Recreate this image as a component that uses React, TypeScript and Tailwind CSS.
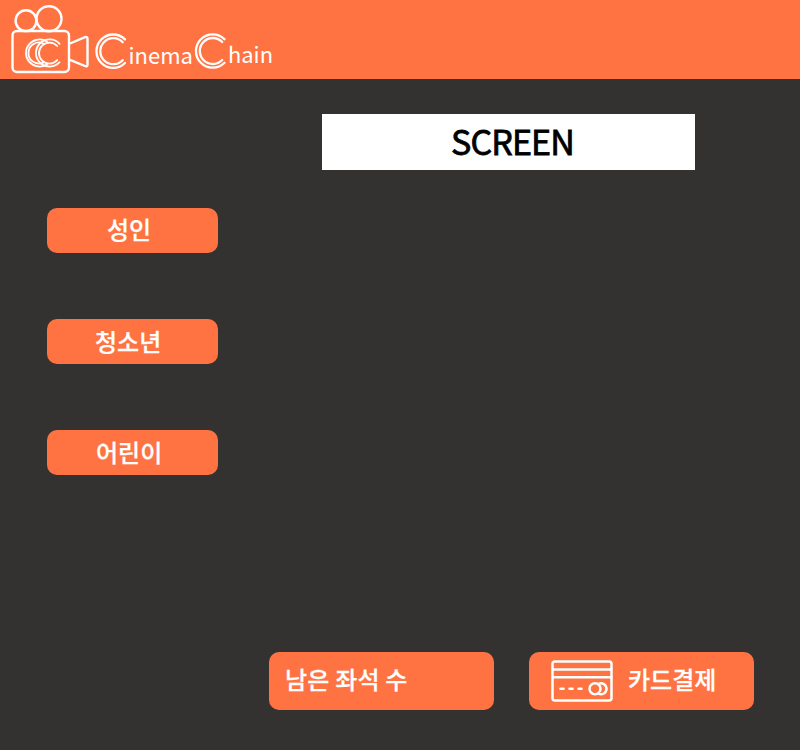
import type { ReactNode } from "react";

const fontStack = "font-['Noto_Sans_CJK_KR',sans-serif]";

function Logo() {
  return (
    <svg width="280" height="79" viewBox="0 0 280 79" fill="none" stroke="white">
      <g strokeWidth="2.4">
        <circle cx="26" cy="20.7" r="10.4" />
        <circle cx="49" cy="18.7" r="12.5" />
        <rect x="12.5" y="31" width="56.5" height="41" rx="4.5" />
        <path d="M70 43.5 L85 37.2 Q87.5 36.5 87.5 39 V64.5 Q87.5 67 85 66 L70 59.8" strokeLinejoin="round" />
      </g>
      <g strokeWidth="1.8" strokeLinecap="round">
        <path d="M47 41.6 A13.6 13.6 0 1 0 47 64.4" />
        <path d="M44 43.8 A10.5 10.5 0 1 0 44 62.2" />
        <path d="M59.6 43.8 A13.6 13.6 0 1 0 59.6 62.2" />
        <path d="M57.2 46 A10.5 10.5 0 1 0 57.2 60.2" />
      </g>
      <g strokeWidth="2.3" strokeLinecap="round">
        <path d="M125 39.4 A16.7 16.7 0 1 0 125 63" />
        <path d="M122.7 42.2 A13 13 0 1 0 122.7 60.2" />
        <path d="M224.5 39.2 A16.7 16.7 0 1 0 224.5 62.8" />
        <path d="M222.2 42 A13 13 0 1 0 222.2 60" />
      </g>
      <g fill="white" stroke="none" className="font-['Noto_Sans_CJK_KR',sans-serif] text-[22.5px]">
        <text x="128.5" y="63.5" textLength="64.5" lengthAdjust="spacingAndGlyphs">inema</text>
        <text x="228" y="63.2" textLength="45" lengthAdjust="spacingAndGlyphs">hain</text>
      </g>
    </svg>
  );
}

function CardIcon() {
  return (
    <svg width="64" height="44" viewBox="0 0 64 44" fill="none" stroke="white" strokeWidth="2.5">
      <rect x="2.5" y="2.5" width="59" height="39" rx="2.5" />
      <path d="M2.5 10.5 H61.5 M2.5 18.2 H61.5" />
      <path d="M10.5 29.8 H13.5 M19.5 29.8 H22.5 M28.5 29.8 H31.5" strokeLinecap="round" />
      <circle cx="45" cy="29.8" r="5.5" />
      <path d="M48.5 24.9 A5.5 5.5 0 1 1 48.5 34.7" />
    </svg>
  );
}

function TicketButton({ children }: { children: ReactNode }) {
  return (
    <button className="flex h-[45px] w-[171px] items-center rounded-[10px] bg-[#ff7343] text-2xl leading-none font-medium text-white [-webkit-text-stroke:0.25px_white]">
      {children}
    </button>
  );
}

export default function App() {
  return (
    <div className={`flex h-[750px] w-[800px] flex-col overflow-hidden border-b border-[#382d2e] bg-[#333230] ${fontStack}`}>
      <header className="h-[79px] shrink-0 bg-[#ff7343]">
        <Logo />
      </header>
      <main className="flex h-[573px] shrink-0">
        <aside className="flex flex-col gap-[66px] pt-[129px] pl-[47px]">
          <TicketButton><span className="pb-[3px] pl-[60px]">성인</span></TicketButton>
          <TicketButton><span className="pb-[2px] pl-[48px]">청소년</span></TicketButton>
          <TicketButton><span className="pb-[2px] pl-[49px]">어린이</span></TicketButton>
        </aside>
        <section className="pt-[35px] pl-[104px]">
          <div className="flex h-14 w-[373px] items-center justify-center bg-white pb-[2px] pl-[8px]">
            <span className="text-[34px] leading-none tracking-[-0.9px] text-black [-webkit-text-stroke:0.8px_black]">SCREEN</span>
          </div>
        </section>
      </main>
      <footer className="flex gap-[35px] pl-[269px] text-2xl leading-none font-medium text-white">
        <div className="flex h-[58px] w-[225px] items-center rounded-[10px] bg-[#ff7343] pb-[4px] pl-4 tracking-[0.2px] [-webkit-text-stroke:0.25px_white]">남은 좌석 수</div>
        <button className="flex h-[58px] w-[225px] items-center gap-[14px] rounded-[10px] bg-[#ff7343] pl-[21px]">
          <CardIcon />
          <span className="pb-[4px] [-webkit-text-stroke:0.25px_white]">카드결제</span>
        </button>
      </footer>
    </div>
  );
}
